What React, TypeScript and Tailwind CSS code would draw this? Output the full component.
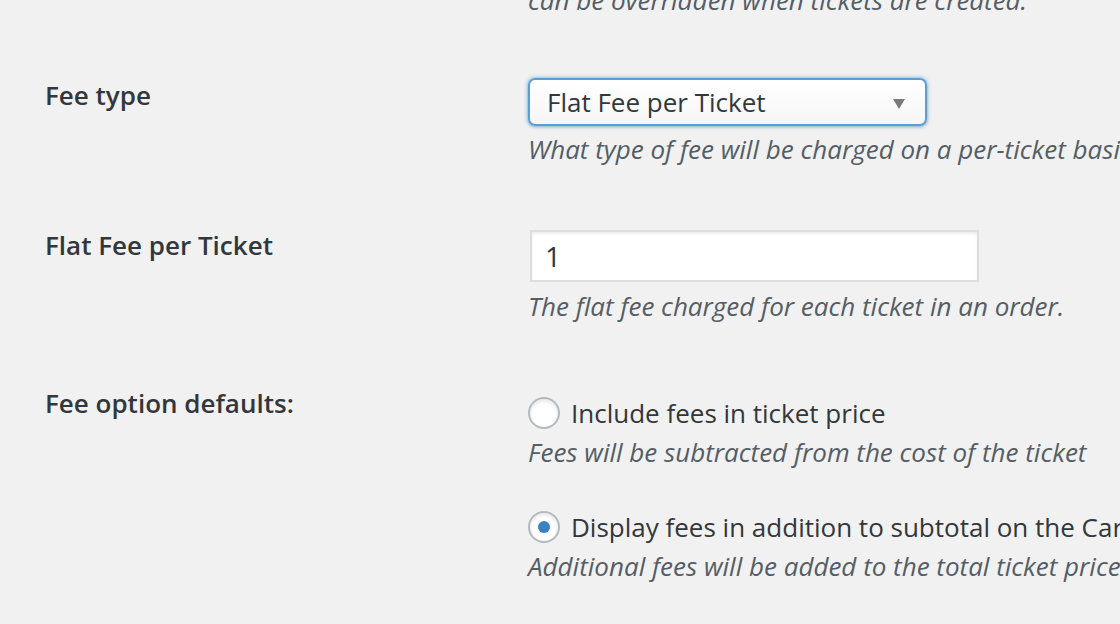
import React from "react";

const labelCls =
  "w-[528px] shrink-0 pl-[45px] pt-[1px] text-[26px] leading-[36px] font-semibold text-[#32373c] whitespace-nowrap";
const descCls = "text-[26px] leading-[36px] italic text-[#555d66] whitespace-nowrap";

const Radio: React.FC<{ checked?: boolean; label: string }> = ({ checked, label }) => (
  <label className="flex items-center h-[36px] whitespace-nowrap">
    <span className="w-[32px] h-[32px] shrink-0 rounded-full border-2 border-[#b4b9be] bg-white shadow-[inset_0_2px_4px_rgba(0,0,0,0.1)] flex items-center justify-center">
      {checked && <span className="w-[12px] h-[12px] rounded-full bg-[#3582c4]" />}
    </span>
    <span className="ml-[11px] text-[26px] text-[#32373c]">{label}</span>
  </label>
);

export default function App() {
  return (
    <div className="w-[1120px] h-[624px] overflow-hidden bg-[#f1f1f1] font-['Open_Sans',sans-serif]">
      <div className={`pl-[528px] -mt-[18px] ${descCls}`}>
        can be overridden when tickets are created.
      </div>

      {/* Fee type */}
      <div className="flex mt-[58px]">
        <div className={labelCls}>Fee type</div>
        <div className="pt-[2px]">
          <div className="relative w-[399px] h-[48px] rounded-[7px] border-2 border-[#5b9dd9] bg-gradient-to-b from-white to-[#f6f6f6] shadow-[0_0_4px_rgba(30,140,190,0.6),0_1px_3px_rgba(0,0,0,0.15)] flex items-center pl-[17px]">
            <span className="text-[26px] text-[#32373c] whitespace-nowrap">Flat Fee per Ticket</span>
            <svg className="absolute right-[20px] top-[19px]" width="12" height="10" viewBox="0 0 12 10">
              <path d="M0 0H12L6 10Z" fill="#7a7a7a" />
            </svg>
          </div>
          <div className={`mt-[5px] ${descCls}`}>What type of fee will be charged on a per-ticket basis.</div>
        </div>
      </div>

      {/* Flat fee */}
      <div className="flex mt-[59px]">
        <div className={labelCls}>Flat Fee per Ticket</div>
        <div className="pt-[4px]">
          <div className="ml-[2px] w-[449px] h-[52px] border-2 border-[#dddddd] bg-white shadow-[inset_0_2px_3px_rgba(0,0,0,0.07)] flex items-center pl-[13px]">
            <span className="text-[28px] text-[#32373c]">1</span>
          </div>
          <div className={`mt-[6px] ${descCls}`}>The flat fee charged for each ticket in an order.</div>
        </div>
      </div>

      {/* Fee option defaults */}
      <div className="flex mt-[60px]">
        <div className={labelCls}>Fee option defaults:</div>
        <div className="pt-[11px]">
          <Radio label="Include fees in ticket price" />
          <div className={`mt-[3px] ${descCls}`}>Fees will be subtracted from the cost of the ticket</div>
          <div className="mt-[39px]">
            <Radio checked label="Display fees in addition to subtotal on the Cart page" />
          </div>
          <div className={`mt-[3px] ${descCls}`}>Additional fees will be added to the total ticket price</div>
        </div>
      </div>
    </div>
  );
}
